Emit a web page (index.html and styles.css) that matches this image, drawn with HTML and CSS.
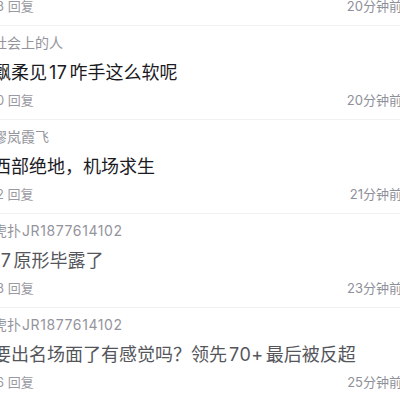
FILE: index.html
```html
<!DOCTYPE html>
<html lang="zh-CN">
<head>
<meta charset="utf-8">
<link rel="stylesheet" href="styles.css">
</head>
<body>
<div class="list">
  <div class="item">
    <div class="user">用户</div>
    <div class="content">内容</div>
    <div class="meta"><span class="replies">3 回复</span><span class="time">20分钟前</span></div>
  </div>
  <div class="item">
    <div class="user">社会上的人</div>
    <div class="content">飘柔见<span class="num">17</span>咋手这么软呢</div>
    <div class="meta"><span class="replies">0 回复</span><span class="time">20分钟前</span></div>
  </div>
  <div class="item">
    <div class="user">缪岚霞飞</div>
    <div class="content">西部绝地，机场求生</div>
    <div class="meta"><span class="replies">2 回复</span><span class="time">21分钟前</span></div>
  </div>
  <div class="item read">
    <div class="user">虎扑<span class="latin">JR1877614102</span></div>
    <div class="content"><span class="num lead">17</span>原形毕露了</div>
    <div class="meta"><span class="replies">3 回复</span><span class="time">23分钟前</span></div>
  </div>
  <div class="item read">
    <div class="user">虎扑<span class="latin">JR1877614102</span></div>
    <div class="content">要出名场面了有感觉吗？领先<span class="num">70+</span>最后被反超</div>
    <div class="meta"><span class="replies">6 回复</span><span class="time">25分钟前</span></div>
  </div>
</div>
</body>
</html>
```
FILE: styles.css
```css
html, body {
  margin: 0;
  padding: 0;
  background: #ffffff;
  overflow: hidden;
}
body {
  width: 400px;
  height: 400px;
  font-family: "Inter", "Noto Sans CJK SC", "Noto Sans", sans-serif;
}
.list {
  margin-top: -68px;
  margin-left: -7px;
  width: 409px;
}
.item {
  padding: 8px 0 10px 0;
  border-bottom: 1px solid #f1f1f3;
}
.user {
  font-size: 14px;
  line-height: 18px;
  color: #94949c;
  white-space: nowrap;
}
.latin {
  margin-left: 1px;
  letter-spacing: 0.6px;
}
.content {
  margin-top: 9px;
  font-size: 18px;
  line-height: 24px;
  color: #1b1b1f;
  white-space: nowrap;
}
.num {
  margin: 0 2px;
  letter-spacing: 0.5px;
}
.num.lead {
  margin-left: 0;
}
.read .content {
  color: #55565c;
}
.meta {
  margin-top: 6px;
  display: flex;
  justify-content: space-between;
  align-items: center;
  font-size: 13px;
  line-height: 18px;
  color: #9a9aa2;
}
.replies {
  padding-left: 3px;
}
.time {
  color: #8e9099;
}
```
